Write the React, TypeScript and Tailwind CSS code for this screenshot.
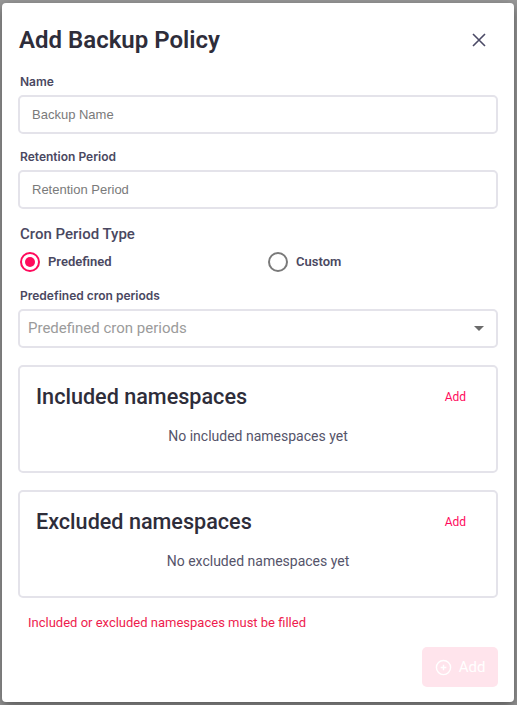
import React from "react";

function Radio({ checked, label }: { checked: boolean; label: string }) {
  return (
    <div className="flex items-center gap-2">
      {checked ? (
        <span className="flex h-5 w-5 items-center justify-center rounded-full border-[2.5px] border-[#ff0a5c]">
          <span className="h-[10px] w-[10px] rounded-full bg-[#ff0a5c]" />
        </span>
      ) : (
        <span className="h-5 w-5 rounded-full border-2 border-[#7a7a7a]" />
      )}
      <span className="text-[13px] font-semibold text-[#4a4861]">{label}</span>
    </div>
  );
}

function NamespaceBox({ title, empty }: { title: string; empty: string }) {
  return (
    <div className="h-[108px] rounded-[5px] border-2 border-[#e4e3ea] px-4 pt-[17px]">
      <div className="flex items-center justify-between">
        <h3 className="text-[21.6px] font-medium leading-[26px] text-[#2e2d3a]">{title}</h3>
        <button className="mr-[14px] text-[12px] text-[#ff0a5c]">Add</button>
      </div>
      <p className="mt-[16px] text-center text-[14px] leading-[20px] text-[#55546a]">{empty}</p>
    </div>
  );
}

export default function App() {
  return (
    <div className="h-[705px] w-[517px] bg-[#999999] px-[2px] pt-[3px] font-['Roboto',sans-serif]">
      <div className="h-[699px] w-[512px] rounded-[4px] bg-white px-4 pt-[21px] shadow-[0_4px_12px_rgba(0,0,0,0.45)]">
        {/* Header */}
        <div className="flex h-8 items-center justify-between">
          <h2 className="ml-[1px] text-[24px] font-semibold text-[#2e2d3a]">Add Backup Policy</h2>
          <button className="mr-[12px] text-[#4b4a66]">
            <svg width="14" height="14" viewBox="0 0 14 14" fill="none">
              <path d="M1 1L13 13M13 1L1 13" stroke="currentColor" strokeWidth="1.6" />
            </svg>
          </button>
        </div>

        {/* Name */}
        <label className="mt-[18px] block pl-[2px] font-['Inter',sans-serif] text-[12px] font-semibold leading-4 text-[#4a4861]">
          Name
        </label>
        <div className="mt-[5px] flex h-[39px] items-center rounded-[5px] border-2 border-[#e4e3ea] px-3 font-['Liberation_Sans',sans-serif] text-[13px] text-[#7a7a7a]">
          Backup Name
        </div>

        {/* Retention */}
        <label className="mt-[15px] block pl-[2px] font-['Inter',sans-serif] text-[12px] font-semibold leading-4 text-[#4a4861]">
          Retention Period
        </label>
        <div className="mt-[5px] flex h-[39px] items-center rounded-[5px] border-2 border-[#e4e3ea] px-3 font-['Liberation_Sans',sans-serif] text-[13px] text-[#7a7a7a]">
          Retention Period
        </div>

        {/* Cron type */}
        <p className="mt-[15px] pl-[2px] text-[15px] font-medium leading-5 text-[#4a4861]">Cron Period Type</p>
        <div className="mt-[8px] grid h-5 grid-cols-[248px_1fr] pl-[2px]">
          <Radio checked label="Predefined" />
          <Radio checked={false} label="Custom" />
        </div>

        <label className="mt-[16px] block pl-[2px] font-['Inter',sans-serif] text-[12px] font-semibold leading-4 text-[#4a4861]">
          Predefined cron periods
        </label>
        <div className="mt-[5px] flex h-[39px] items-center justify-between rounded-[5px] border-2 border-[#e4e3ea] pl-2 pr-3 text-[15px] text-[#9b9b9b]">
          <span>Predefined cron periods</span>
          <svg width="10" height="5" viewBox="0 0 10 5">
            <path d="M0 0H10L5 5Z" fill="#6b6b6b" />
          </svg>
        </div>

        {/* Namespaces */}
        <div className="mt-[17px] flex flex-col gap-[17px]">
          <NamespaceBox title="Included namespaces" empty="No included namespaces yet" />
          <NamespaceBox title="Excluded namespaces" empty="No excluded namespaces yet" />
        </div>

        <p className="mt-[17px] pl-[10px] text-[13px] leading-4 text-[#ee1c4e]">
          Included or excluded namespaces must be filled
        </p>

        <div className="mt-[16px] flex justify-end">
          <button className="flex h-10 w-[76px] items-center justify-center gap-[7px] rounded-[5px] bg-[#ffe4ec] text-[15px] text-white">
            <svg width="17" height="17" viewBox="0 0 24 24" fill="none" stroke="currentColor" strokeWidth="2">
              <circle cx="12" cy="12" r="10" />
              <path d="M12 8v8M8 12h8" />
            </svg>
            Add
          </button>
        </div>
      </div>
    </div>
  );
}
